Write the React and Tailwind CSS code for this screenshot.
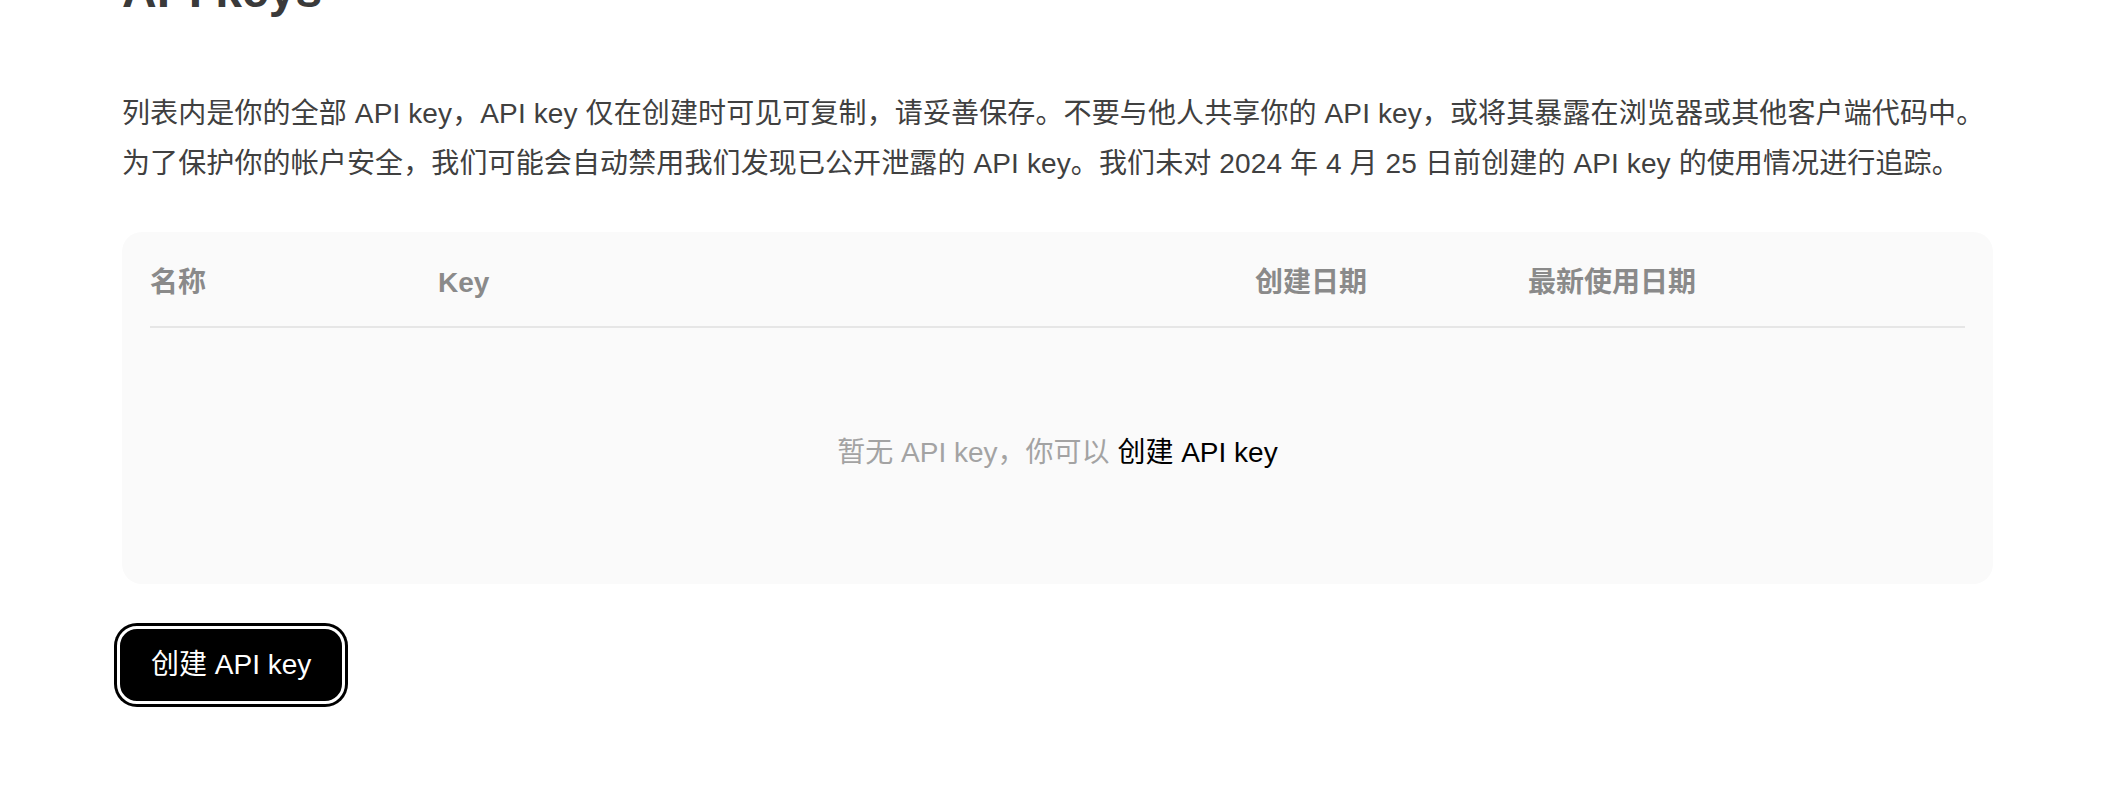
const FONT = "font-['Liberation_Sans','Noto_Sans_CJK_SC',sans-serif]";

const COLUMNS = ['名称', 'Key', '创建日期', '最新使用日期'];

export default function App() {
  return (
    <div className={`min-h-[798px] bg-white pl-[122px] pr-[109px] overflow-hidden ${FONT}`}>
      {/* Title, scrolled partly out of view */}
      <h1 className="mt-[-38px] text-[48px] leading-[58px] font-bold text-[#3a3a3a]">API keys</h1>

      {/* Description */}
      <p className="mt-[69px] text-[28px] leading-[50px] tracking-[0.12px] text-[#404040]">
        列表内是你的全部 API key，API key 仅在创建时可见可复制，请妥善保存。不要与他人共享你的 API key，或将其暴露在浏览器或其他客户端代码中。
        <br />
        为了保护你的帐户安全，我们可能会自动禁用我们发现已公开泄露的 API key。我们未对 2024 年 4 月 25 日前创建的 API key 的使用情况进行追踪。
      </p>

      {/* Keys table */}
      <div className="mt-[43px] rounded-[20px] bg-[#fafafa] px-[28px] pt-[30px] pb-[10px]">
        <div className="grid grid-cols-[288px_817px_273px_1fr] h-[42px] items-center">
          {COLUMNS.map((col) => (
            <div key={col} className="text-[28px] leading-[42px] font-bold text-[#8a8a8a]">
              {col}
            </div>
          ))}
        </div>
        <div className="mt-[22px] h-[2px] bg-[#e6e6e6]" />
        <div className="flex h-[246px] items-center justify-center pt-[4px] text-[28px] leading-[40px]">
          <span className="text-[#a3a3a3]">暂无 API key，你可以&nbsp;</span>
          <button className="text-black">创建 API key</button>
        </div>
      </div>

      {/* Create button */}
      <button className="mt-[42px] ml-[-5px] h-[78px] rounded-[20px] border-[3px] border-white bg-black px-[31px] text-[28px] leading-[40px] text-white shadow-[0_0_0_3px_#000]">
        创建 API key
      </button>
    </div>
  );
}
